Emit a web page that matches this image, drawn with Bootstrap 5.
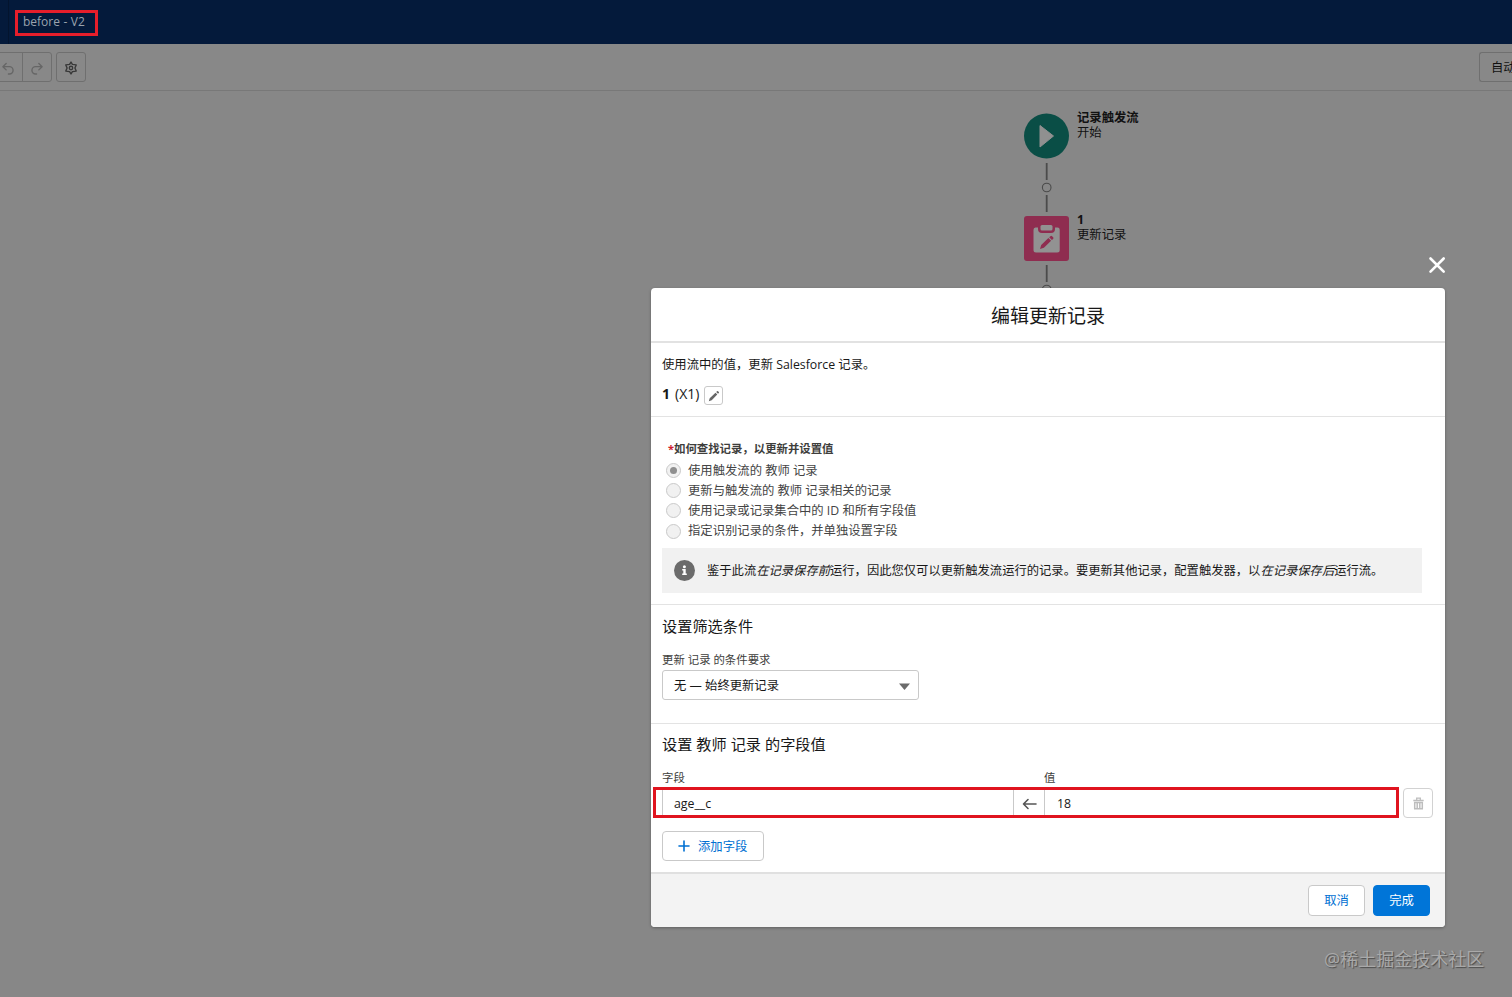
<!DOCTYPE html>
<html lang="zh-CN">
<head>
<meta charset="utf-8">
<title>before - V2</title>
<link href="https://cdn.jsdelivr.net/npm/bootstrap@5.3.0/dist/css/bootstrap.min.css" rel="stylesheet">
<script src="https://cdn.jsdelivr.net/npm/bootstrap@5.3.0/dist/js/bootstrap.bundle.min.js"></script>
<style>
body{font-family:"Open Sans","Noto Sans CJK SC",sans-serif;font-size:12.33px;line-height:18px;color:#181818;background:#878787;width:1512px;height:997px;overflow:hidden}
svg{display:block;flex:none}
.topbar{height:44px;background:#041a3b}
.topbar .edge{width:9px;height:44px;border-right:1px solid #03142e}
.flow-name{margin:10px 0 0 6px;width:83px;height:26px;border:3px solid #e61e2b;color:#9aa3ae;font-size:12px;line-height:17px;padding-left:5px;white-space:nowrap;word-spacing:.4px}
.toolbar{height:47px;background:#888;border-bottom:1px solid #787878;padding-top:8px}
.tool{height:30px;border:1px solid #6f6f6f;border-radius:3px;width:30px}
.tool-undo{width:29px;margin-left:-6px;border-radius:3px 0 0 3px;padding-top:2px}
.tool-redo{width:30px;margin-left:-1px;border-radius:0 3px 3px 0;padding-top:2px}
.tool-auto{width:33px;border-right:0;border-radius:3px 0 0 3px;padding:2px 0 0 11px;color:#111;white-space:nowrap}
.flow-node{position:absolute;left:1024px;line-height:15px;color:#111;gap:8px}
.node-icon{width:45px;height:45px}
.links{position:absolute;left:1039px}
.dialog{position:absolute;left:651px;top:288px;width:794px;height:639px;background:#fff;border-radius:4px;box-shadow:0 1px 3px rgba(0,0,0,.3);overflow:hidden}
.dialog-close{position:absolute;left:1428px;top:256px}
.dialog-head{height:55px;border-bottom:2px solid #e2e2e2;font-size:19px;padding-top:2px}
.sec{padding:0 11px;border-bottom:1px solid #e3e3e3}
.sec h2{font-size:15.2px;line-height:20px;margin:0;font-weight:400}
.lbl{font-size:11.4px;line-height:16px;color:#3e3e3c}
.edit-btn{width:19px;height:19px;border:1px solid #c9c9c9;border-radius:3px}
.opt{height:20.4px;color:#444;gap:7px}
.dot{width:15px;height:15px;border:1px solid #c9c9c9;border-radius:50%;background:#f1f1f1}
.dot i{width:7px;height:7px;border-radius:50%;background:#8f8f8f}
.notice{width:760px;height:45px;background:#f1f1f1;padding-left:12px;margin-top:6px;white-space:nowrap;font-size:12.3px}
.pick{width:257px;height:30px;border:1px solid #c9c9c9;border-radius:3px;padding:1px 8px 0 11px}
.assign{position:relative;height:31px;margin:1px 0 0 -9px}
.assign-box{width:746px;height:31px;border:3px solid #e0141f;padding-left:6px}
.f1{width:352px;border:solid #c9c9c9;border-width:0 1px;padding-left:11px;padding-top:2px}
.f2{width:30px}
.f3{border-left:1px solid #c9c9c9;padding-left:12px;padding-top:2px}
.trash{width:30px;height:30px;border:1px solid #d2d2d2;border-radius:4px;margin-left:4px;padding-top:2px}
.b{height:31px;border:1px solid #c9c9c9;border-radius:4px;color:#0070d2;background:#fff}
.dialog-foot{background:#f3f3f3;border-top:2px solid #e0e0e0;height:55px;padding:11px 15px 0 0;gap:8px}
.wm{position:absolute;left:1324px;top:946px;font-size:18px;line-height:26px;color:#a9a9a9;text-shadow:1px 1px 1px #4d4d4d;white-space:nowrap}
</style>
</head>
<body>
<header class="topbar d-flex">
  <div class="edge"></div>
  <div class="flow-name">before - V2</div>
</header>
<nav class="toolbar d-flex align-items-start">
  <div class="tool tool-undo d-flex align-items-center justify-content-end pe-2"><svg width="12" height="13" viewBox="0 0 13 14" fill="none" stroke="#666" stroke-width="1.500" stroke-linecap="round" stroke-linejoin="round"><path d="M4.500 1.500 1 5l3.500 3.500M1.500 5H8a4 4 0 0 1 4 4v0a4 4 0 0 1-4 4H7"/></svg></div>
  <div class="tool tool-redo d-flex align-items-center justify-content-center"><svg width="12" height="13" viewBox="0 0 13 14" fill="none" stroke="#666" stroke-width="1.500" stroke-linecap="round" stroke-linejoin="round"><path d="M8.500 1.500 12 5 8.500 8.500M11.500 5H5a4 4 0 0 0-4 4v0a4 4 0 0 0 4 4h1"/></svg></div>
  <div class="tool d-flex align-items-center justify-content-center" style="margin-left:4px"><svg width="14" height="14" viewBox="0 0 14 14" fill="none" stroke="#383838" stroke-linejoin="round" style="margin-top:2px"><path stroke-width="1.400" d="M7 1 8.400 3.400 12.200 3.900 10.900 7 12.200 10.100 8.400 10.600 7 13 5.600 10.600 1.800 10.100 3.100 7 1.800 3.900 5.600 3.400z"/><circle cx="7" cy="7" r="1.700" stroke-width="1.400"/></svg></div>
  <div class="tool tool-auto d-flex align-items-center ms-auto overflow-hidden">自动</div>
</nav>

<main>
  <div class="flow-node d-flex" style="top:113px">
    <svg class="node-icon" viewBox="0 0 45 45" overflow="visible"><circle cx="22.500" cy="23" r="22.500" fill="#0a4e46"/><path d="M16 12.500v21.500L29.500 23z" fill="#909090" stroke="#909090" stroke-linejoin="round"/></svg>
    <div style="margin-top:-3px"><div class="fw-bold">记录触发流</div><div>开始</div></div>
  </div>
  <svg class="links" style="top:162px" width="15" height="50" fill="none" stroke="#4b4b4b"><path stroke-width="1.800" d="M7.700 1v17M7.700 33v17"/><circle cx="7.700" cy="25.500" r="4.300" stroke-width="1.100"/></svg>
  <div class="flow-node d-flex" style="top:216px">
    <svg class="node-icon" viewBox="0 0 45 45"><rect width="45" height="45" rx="3" fill="#8f2d50"/><path d="M11.500 11.500H14v1.500a4 4 0 0 0 4 4h9a4 4 0 0 0 4-4v-1.500h2.500a2.200 2.200 0 0 1 2.200 2.200V34a2.500 2.500 0 0 1-2.500 2.500H12a2.500 2.500 0 0 1-2.500-2.500V13.700a2.200 2.200 0 0 1 2-2.200z" fill="#929292"/><path d="M18 9h9a1.500 1.500 0 0 1 1.500 1.500V13a1.500 1.500 0 0 1-1.500 1.500h-9a1.500 1.500 0 0 1-1.500-1.500v-2.500A1.500 1.500 0 0 1 18 9z" fill="#929292"/><path d="m16 33 1.200-4 7.200-6.900 2.700 2.700-7.200 6.900zM25.200 21.300l1.200-1.100a1.200 1.200 0 0 1 1.700 0l1 1a1.200 1.200 0 0 1 0 1.700l-1.200 1.100z" fill="#8f2d50"/></svg>
    <div style="margin-top:-4px"><div class="fw-bold">1</div><div>更新记录</div></div>
  </div>
  <svg class="links" style="top:264px" width="15" height="30" fill="none" stroke="#4b4b4b"><path stroke-width="1.800" d="M7.700 1v17"/><circle cx="7.700" cy="25.500" r="4.300" stroke-width="1.100"/></svg>
</main>

<svg class="dialog-close" width="18" height="18" fill="none" stroke="#fff" stroke-width="2.600" stroke-linecap="round"><path d="m2.500 2.500 13.200 13.200M15.700 2.500 2.500 15.700"/></svg>
<section class="dialog">
  <div class="dialog-head d-flex align-items-center justify-content-center">编辑更新记录</div>

  <div class="sec" style="height:74px;padding-top:13px">
    <div>使用流中的值，更新 Salesforce 记录。</div>
    <div class="d-flex align-items-center" style="height:20px;margin-top:10px;font-size:14px"><b>1</b><span style="margin-left:5px">(X1)</span>
      <span class="edit-btn d-flex align-items-center justify-content-center" style="margin-left:5px;margin-top:2px"><svg width="12" height="12" viewBox="0 0 12 12" fill="#666" style="margin-top:1px"><path d="m.800 11.200.9-3L7.500 2.700 9.300 4.500 3.700 10.300zM8.200 2l.8-.8a.8.8 0 0 1 1.100 0l.7.7a.8.8 0 0 1 0 1.100l-.8.8z"/></svg></span>
    </div>
  </div>

  <div class="sec" style="height:188px;padding-top:24px">
    <div class="lbl fw-bold" style="margin-left:6px;margin-bottom:3px"><span style="color:#d0202e;font-size:11px">*</span>如何查找记录，以更新并设置值</div>
    <div style="margin-left:4px">
      <div class="opt d-flex align-items-center"><span class="dot d-flex align-items-center justify-content-center"><i></i></span><span style="padding-top:1px">使用触发流的 教师 记录</span></div>
      <div class="opt d-flex align-items-center"><span class="dot"></span>更新与触发流的 教师 记录相关的记录</div>
      <div class="opt d-flex align-items-center"><span class="dot"></span><span style="padding-top:1px">使用记录或记录集合中的 ID 和所有字段值</span></div>
      <div class="opt d-flex align-items-center"><span class="dot"></span>指定识别记录的条件，并单独设置字段</div>
    </div>
    <div class="notice d-flex align-items-center">
      <svg width="21" height="21" viewBox="0 0 21 21"><circle cx="10.500" cy="10.500" r="10.500" fill="#6b6b6b"/><circle cx="10.400" cy="6.700" r="1.500" fill="#fff"/><path d="M8.200 9h3.500v4.500h1.100V15H8.200v-1.500h1.100v-3H8.200z" fill="#fff"/></svg>
      <span style="margin-left:12px;padding-top:1px">鉴于此流<em>在记录保存前</em>运行，因此您仅可以更新触发流运行的记录。要更新其他记录，配置触发器，以<em>在记录保存后</em>运行流。</span>
    </div>
  </div>

  <div class="sec" style="height:119px;padding-top:11px">
    <h2>设置筛选条件</h2>
    <div class="lbl" style="margin:16px 0 2px">更新 记录 的条件要求</div>
    <div class="pick d-flex align-items-center justify-content-between">无 — 始终更新记录<svg width="11" height="7" style="margin-top:2px"><path d="M0 .5h11L5.500 7z" fill="#6b6b6b"/></svg></div>
  </div>

  <div class="sec border-0" style="height:148px;padding-top:10px">
    <h2>设置 教师 记录 的字段值</h2>
    <div class="lbl d-flex" style="margin-top:16px"><span style="width:382px">字段</span><span>值</span></div>
    <div class="assign d-flex align-items-center">
      <div class="assign-box d-flex align-items-stretch">
        <div class="f1 d-flex align-items-center">age__c</div>
        <div class="f2 d-flex align-items-center justify-content-center"><svg width="15" height="12" fill="none" stroke="#555" stroke-width="1.600" stroke-linecap="round" stroke-linejoin="round" style="margin-top:2px"><path d="M14 6H1.500M6 1.500 1.500 6 6 10.500"/></svg></div>
        <div class="f3 d-flex align-items-center flex-grow-1">18</div>
      </div>
      <div class="trash d-flex align-items-center justify-content-center"><svg width="11" height="13" viewBox="0 0 11 13" fill="none" stroke="#bdbdbd"><path stroke-width="1.300" d="M.3 3.500h10.400M3.700 3.200V1.200h3.600v2"/><path stroke-width="1.500" d="M1.700 5.500h7.600v6.200H1.700zM4.200 5.500v6M6.800 5.500v6"/></svg></div>
    </div>
    <div class="b d-flex align-items-center" style="width:102px;height:30px;margin-top:13px;padding-left:15px;gap:8px"><svg width="12" height="12" stroke="#0070d2" stroke-width="1.600" stroke-linecap="round"><path d="M6 1v10M1 6h10"/></svg><span style="padding-top:1px">添加字段</span></div>
  </div>

  <div class="dialog-foot d-flex justify-content-end">
    <div class="b d-flex align-items-center justify-content-center" style="width:57px">取消</div>
    <div class="b d-flex align-items-center justify-content-center text-white" style="width:57px;background:#0075d8;border-color:#0075d8">完成</div>
  </div>
</section>
<div class="wm">@稀土掘金技术社区</div>
</body>
</html>
